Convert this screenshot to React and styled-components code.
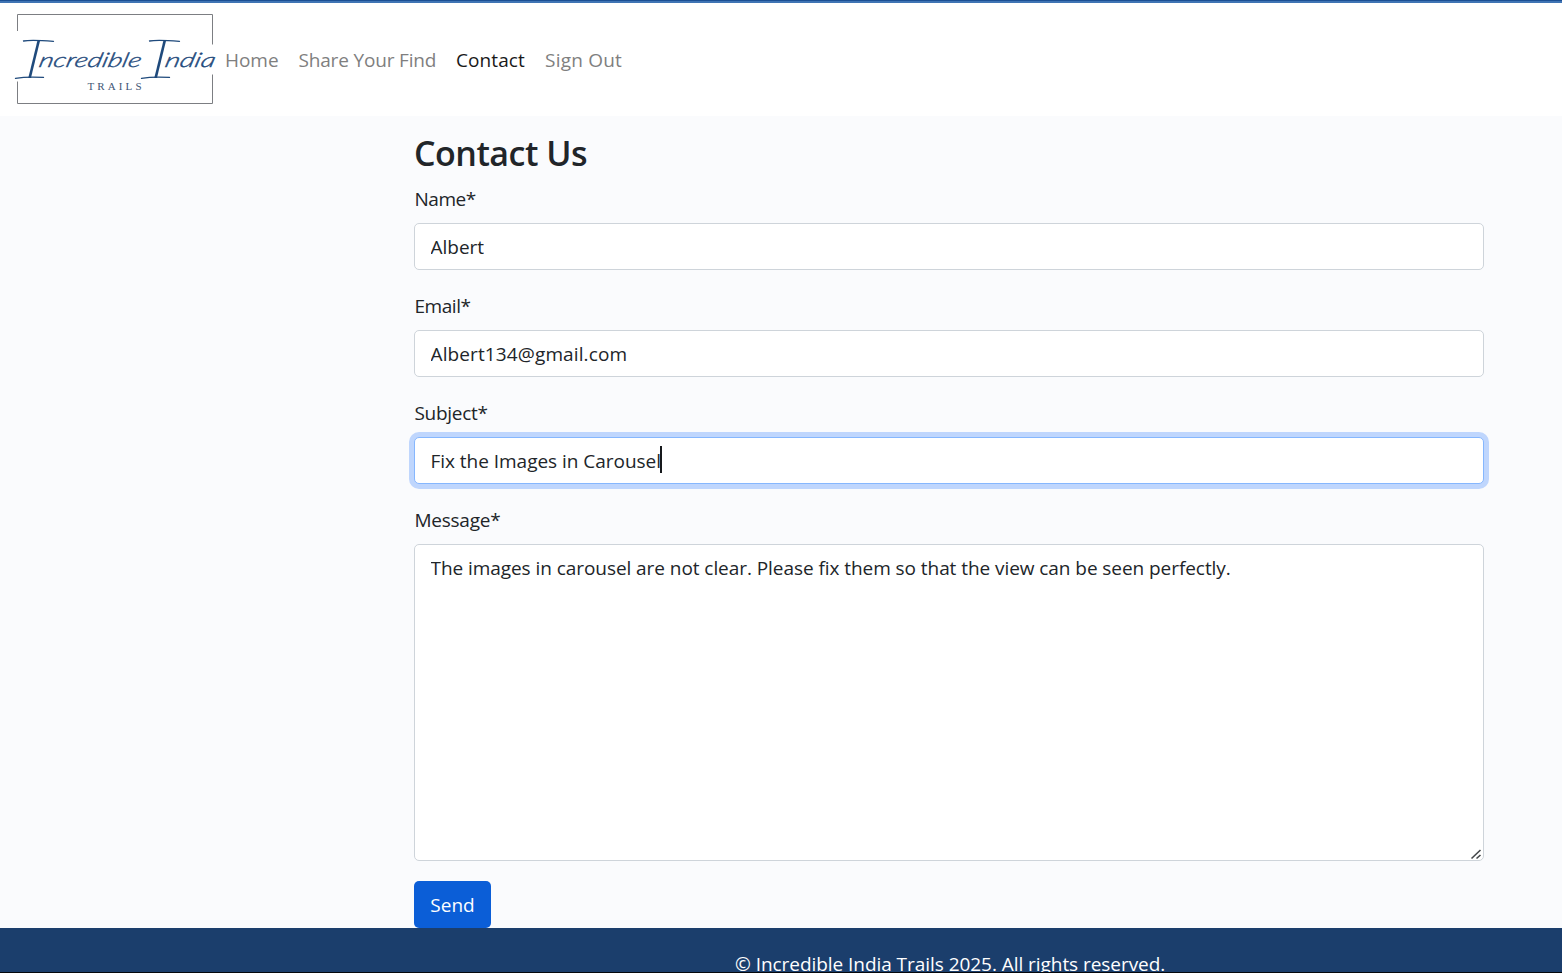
import React from "react";
import styled, { createGlobalStyle } from "styled-components";

const GlobalStyle = createGlobalStyle`
  * { box-sizing: border-box; }
  body {
    margin: 0;
    background: #fafbfd;
    color: #212529;
    font-family: "Open Sans", "Noto Sans", sans-serif;
    font-size: 19px;
    line-height: 30px;
    overflow: hidden;
  }
`;

const Page = styled.div`
  height: 973px;
  display: flex;
  flex-direction: column;
  overflow: hidden;
`;

const TopStripe = styled.div`
  flex: none;
  height: 3px;
  background: #1b4f94;
  border-bottom: 2px solid #3f74b4;
`;

const Navbar = styled.nav`
  flex: none;
  height: 113px;
  display: flex;
  align-items: center;
  background: #fff;
`;

const Logo = styled.svg`
  display: block;
  width: 220px;
  height: 113px;
`;

const NavLinks = styled.div`
  display: flex;
  gap: 20px;
  padding-left: 5px;
`;

/* Single line of text with its own tracking. */
const Text = styled.span`
  display: block;
  white-space: nowrap;
  letter-spacing: ${(p) => p.$track || 0}px;
`;

const NavLink = styled.a`
  width: ${(p) => p.$w}px;
  white-space: nowrap;
  letter-spacing: ${(p) => p.$track || 0}px;
  color: ${(p) => (p.$active ? "#191919" : "#7f7f7f")};
`;

const Form = styled.form`
  flex: none;
  width: 1070px;
  height: 812px;
  margin-left: 414px;
  padding-top: 17px;
`;

const Title = styled.h1`
  margin: 0 0 10px;
  font-size: 34px;
  font-weight: 550;
  line-height: 41px;
  letter-spacing: -0.5px;
`;

const Field = styled.div`
  margin-bottom: 20px;
`;

const Label = styled.label`
  display: block;
  margin-bottom: 9px;
  padding-left: 0.5px;
  letter-spacing: ${(p) => p.$track || 0}px;

  ${Field} + ${Field} & {
    padding-top: 1px;
  }
`;

const Control = styled.div`
  position: relative;
  display: flex;
  align-items: center;
  height: 47px;
  padding: 0 15.5px;
  background: #fff;
  border: 1px solid ${(p) => (p.$focused ? "#86b7fe" : "#ced4da")};
  border-radius: 5px;
  box-shadow: ${(p) => (p.$focused ? "0 0 0 5px #bfd6fd" : "none")};
`;

const Input = styled.input`
  field-sizing: content;
  padding: 0;
  border: 0;
  outline: 0;
  background: transparent;
  color: inherit;
  font: inherit;
  letter-spacing: ${(p) => p.$track || 0}px;
`;

const Caret = styled.span`
  width: 2px;
  height: 27px;
  margin: -2px 0 0 -1px;
  background: #16191c;
`;

const MessageBox = styled(Control)`
  height: 317px;
  padding: 8px 15.5px;
  align-items: stretch;
`;

const TextArea = styled.textarea`
  flex: 1;
  padding: 0;
  border: 0;
  outline: 0;
  resize: none;
  background: transparent;
  color: inherit;
  font: inherit;
  letter-spacing: ${(p) => p.$track || 0}px;
`;

const Grip = styled.svg`
  position: absolute;
  right: 1px;
  bottom: 0;
  width: 12px;
  height: 12px;
`;

const SendButton = styled.button`
  display: block;
  width: 77px;
  height: 47px;
  padding: 0;
  border: 0;
  border-radius: 5px;
  background: #0b5ed7;
  color: #fff;
  font: inherit;
`;

const Footer = styled.footer`
  flex: none;
  height: 45px;
  padding: 21px 0 0 735px;
  overflow: hidden;
  background: #1b3e6c;
  border-bottom: 1px solid #05080c;
  color: #fff;
`;

const Word = ({ x, rest, restWidth }) => (
  <g transform={`translate(${x} 0)`} fill="#1f4a7c" stroke="#1f4a7c">
    <g fill="none" strokeWidth="1.3" strokeLinecap="round">
      <path d="M8.5 38 Q16 36.8 38.5 38.3" />
      <path d="M.5 75.3 Q12 73.4 28.5 74.4" />
    </g>
    <text
      transform="translate(10 74.5) skewX(-7)"
      fontFamily="Lato"
      fontStyle="italic"
      fontWeight="300"
      fontSize="53"
      strokeWidth="0"
    >
      I
    </text>
    <text
      transform="translate(23 64.3) skewX(-14)"
      fontFamily="Lato"
      fontStyle="italic"
      fontWeight="300"
      fontSize="20"
      strokeWidth="0.4"
      textLength={restWidth}
      lengthAdjust="spacingAndGlyphs"
    >
      {rest}
    </text>
  </g>
);

const BrandLogo = () => (
  <Logo viewBox="0 0 220 113" role="img" aria-label="Incredible India Trails">
    <path
      d="M17.5 28V11.5H212.5V41.5M212.5 71.5V100.5H17.5V78.5"
      fill="none"
      stroke="#7c7e82"
    />
    <Word x={15} rest="ncredible" restWidth={102} />
    <Word x={141} rest="ndia" restWidth={50} />
    <text
      x="87.5"
      y="87"
      fontFamily="Liberation Serif"
      fontSize="11"
      fill="#3f5675"
      textLength="54"
    >
      TRAILS
    </text>
  </Logo>
);

export default function App() {
  return (
    <Page>
      <GlobalStyle />
      <TopStripe />
      <Navbar>
        <BrandLogo />
        <NavLinks>
          <NavLink $w={53.5} $track={-0.05}>Home</NavLink>
          <NavLink $w={137.5} $track={-0.17}>Share Your Find</NavLink>
          <NavLink $w={69} $track={0.08} $active>Contact</NavLink>
          <NavLink $w={78} $track={0.22}>Sign Out</NavLink>
        </NavLinks>
      </Navbar>
      <Form>
        <Title>Contact Us</Title>
        <Field>
          <Label $track={-0.45}>Name*</Label>
          <Control>
            <Input defaultValue="Albert" />
          </Control>
        </Field>
        <Field>
          <Label $track={-0.45}>Email*</Label>
          <Control>
            <Input defaultValue="Albert134@gmail.com" $track={0.12} />
          </Control>
        </Field>
        <Field>
          <Label $track={-0.3}>Subject*</Label>
          <Control $focused>
            <Input defaultValue="Fix the Images in Carousel" $track={-0.03} />
            <Caret />
          </Control>
        </Field>
        <Field>
          <Label $track={-0.25}>Message*</Label>
          <MessageBox>
            <TextArea
              $track={-0.06}
              spellCheck={false}
              defaultValue="The images in carousel are not clear. Please fix them so that the view can be seen perfectly."
            />
            <Grip viewBox="0 0 12 12">
              <path d="M1.5 10.5L10.5 2M6.5 10.5L10.5 7" stroke="#44474a" strokeWidth="1.6" fill="none" />
            </Grip>
          </MessageBox>
        </Field>
        <SendButton type="button">Send</SendButton>
      </Form>
      <Footer>
        <Text $track={-0.05}>© Incredible India Trails 2025. All rights reserved.</Text>
      </Footer>
    </Page>
  );
}
